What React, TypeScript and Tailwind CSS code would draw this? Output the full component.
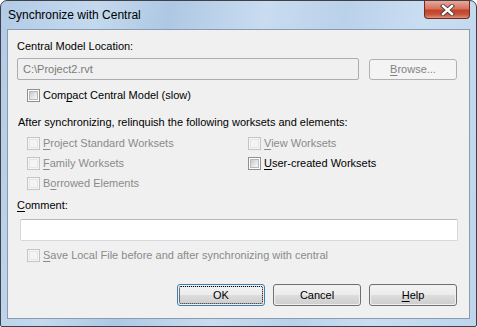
import React from "react";

function Box({ disabled }: { disabled?: boolean }) {
  return (
    <span
      className={
        "inline-flex shrink-0 w-[13px] h-[13px] border p-[1px] " +
        (disabled ? "border-[#c5c5c5] bg-[#f4f4f4]" : "border-[#8e8f8f] bg-white")
      }
    >
      <span
        className={
          "block w-full h-full " +
          (disabled
            ? "bg-[#f4f4f4] border border-[#e6e6e6]"
            : "bg-[linear-gradient(135deg,#c6c9ce_0%,#e2e3e6_50%,#f8f8f8_100%)] border border-[#b4b8bd]")
        }
      />
    </span>
  );
}

function Check({
  pre,
  u,
  post,
  disabled,
}: {
  pre: string;
  u: string;
  post: string;
  disabled?: boolean;
}) {
  return (
    <div className="flex items-center h-[15px] gap-[3px]">
      <Box disabled={disabled} />
      <span className={"whitespace-nowrap " + (disabled ? "text-[#8a8a8a]" : "text-black")}>
        {pre}
        <span className="underline underline-offset-[2px] decoration-1">{u}</span>
        {post}
      </span>
    </div>
  );
}

function Btn({
  children,
  def,
  disabled,
}: {
  children: React.ReactNode;
  def?: boolean;
  disabled?: boolean;
}) {
  if (disabled) {
    return (
      <div className="w-[88px] h-[21px] rounded-[3px] border border-[#adb2b5] bg-[#f4f4f4] flex items-center justify-center text-[#838383]">
        {children}
      </div>
    );
  }
  return (
    <div
      className={
        "w-[88px] h-[22px] rounded-[3px] border p-[1px] " +
        (def ? "border-[#3c7fb1]" : "border-[#707070]")
      }
    >
      <div
        className={
          "w-full h-full rounded-[2px] bg-[linear-gradient(180deg,#f2f2f2_0%,#ebebeb_50%,#dddddd_51%,#cfcfcf_100%)] flex items-center justify-center " +
          (def ? "border border-dotted border-black" : "")
        }
      >
        {children}
      </div>
    </div>
  );
}

export default function App() {
  return (
    <div className="w-[477px] h-[327px] font-['Liberation_Sans',Arial,sans-serif] text-[11px] leading-[15px] text-black">
      <div className="w-full h-full rounded-t-[7px] rounded-b-[2px] border border-[#3e4248] bg-[linear-gradient(100deg,#b2cbe6_0%,#c4d9ee_18%,#aec8e4_32%,#c9dcf0_50%,#bad1ea_65%,#cadef2_80%,#bed5ec_100%)] flex flex-col px-[6px] pb-[7px]">
        <div className="h-[28px] flex items-start justify-between">
          <div className="pl-[1px] pt-[7px] text-[12px] text-[#000]">Synchronize with Central</div>
          <div className="w-[46px] h-[18px] rounded-b-[4px] border border-t-0 border-[#6b2d22] bg-[linear-gradient(180deg,#e9a99b_0%,#d6735f_45%,#c2412a_55%,#c8553c_80%,#e0907a_100%)] flex items-center justify-center">
            <svg width="15" height="12" viewBox="0 0 15 12">
              <path
                d="M3 2 L12 10 M12 2 L3 10"
                stroke="#4a3a3a"
                strokeWidth="4.2"
                strokeLinecap="square"
              />
              <path
                d="M3 2 L12 10 M12 2 L3 10"
                stroke="#ffffff"
                strokeWidth="2.4"
                strokeLinecap="square"
              />
            </svg>
          </div>
        </div>
        <div className="flex-1 border border-[#8a9bb0] bg-[#f0f0f0] flex flex-col">
          <div className="ml-[9px] mt-[9px]">Central Model Location:</div>
          <div className="flex items-start mt-[4px]">
            <div className="ml-[9px] w-[342px] h-[22px] rounded-[2px] border border-[#abadb3] flex items-center pl-[5px] text-[#7a7a7a]">
              C:\Project2.rvt
            </div>
            <div className="ml-[10px] mt-[1px]">
              <Btn disabled>
                <span>
                  <span className="underline underline-offset-[2px] decoration-1">B</span>rowse...
                </span>
              </Btn>
            </div>
          </div>
          <div className="ml-[19px] mt-[8px]">
            <Check pre="Com" u="p" post="act Central Model (slow)" />
          </div>
          <div className="ml-[10px] mt-[12px]">
            After synchronizing, relinquish the following worksets and elements:
          </div>
          <div className="ml-[19px] mt-[6px] grid grid-cols-[221px_1fr] gap-y-[5px]">
            <Check pre="" u="P" post="roject Standard Worksets" disabled />
            <Check pre="" u="V" post="iew Worksets" disabled />
            <Check pre="" u="F" post="amily Worksets" disabled />
            <Check pre="" u="U" post="ser-created Worksets" />
            <Check pre="B" u="o" post="rrowed Elements" disabled />
          </div>
          <div className="ml-[9px] mt-[7px]">
            <span className="underline underline-offset-[2px] decoration-1">C</span>omment:
          </div>
          <div className="ml-[12px] mt-[6px] w-[438px] h-[22px] rounded-[2px] border border-[#d5d8dc] border-t-[#b5b8bd] bg-white" />
          <div className="ml-[19px] mt-[7px]">
            <Check pre="" u="S" post="ave Local File before and after synchronizing with central" disabled />
          </div>
          <div className="flex justify-end gap-[8px] mt-[21px] pr-[12px]">
            <Btn def>OK</Btn>
            <Btn>Cancel</Btn>
            <Btn>
              <span>
                <span className="underline underline-offset-[2px] decoration-1">H</span>elp
              </span>
            </Btn>
          </div>
        </div>
      </div>
    </div>
  );
}
